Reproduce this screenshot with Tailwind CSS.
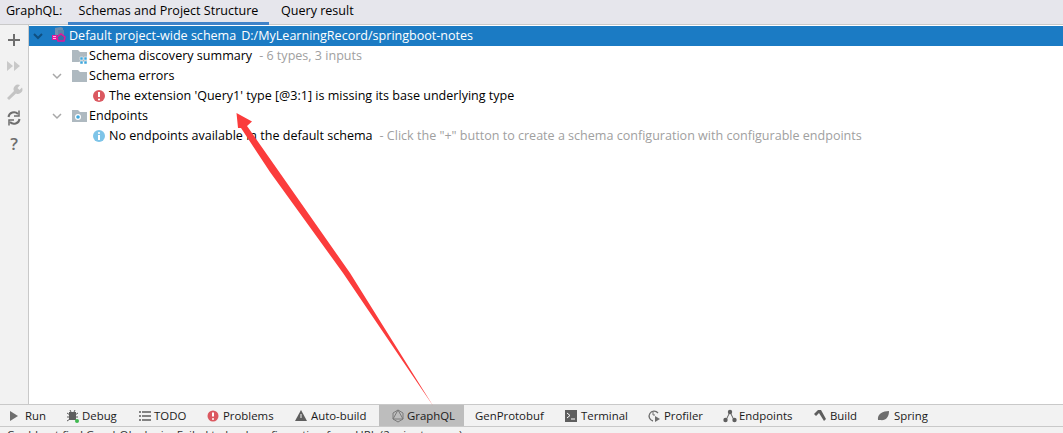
<!DOCTYPE html>
<html lang="en">
<head>
<meta charset="utf-8">
<title>GraphQL tool window</title>
<script src="https://cdn.jsdelivr.net/npm/@tailwindcss/browser@4"></script>
</head>
<body class="relative w-[1063px] h-[433px] overflow-hidden bg-white text-[12.55px] leading-5 text-black font-['Open_Sans','Noto_Sans',sans-serif]">

<!-- tabs -->
<header class="flex h-[25px] bg-[#e6e6ec] border-b border-[#c9c9c9]">
    <div class="w-[68px] pl-[6px] pt-[1px]">GraphQL:</div>
    <div class="w-[201px] text-center pt-[1px] border-b-[3px] border-[#4083c9] h-[25px]">Schemas and Project Structure</div>
    <div class="ml-[12px] pt-[1px]">Query result</div>
</header>

<div class="flex h-[379px]">
    <!-- left toolbar -->
    <aside class="w-[29px] shrink-0 bg-[#f2f2f2] border-r border-[#c9c9c9] flex flex-col items-center pt-[5px] gap-[6px]">
        <svg width="20" height="20" viewBox="0 0 20 20"><path d="M4 10h12M10 4v12" stroke="#6e6e6e" stroke-width="2"/></svg>
        <svg width="20" height="20" viewBox="0 0 20 20"><path d="M3 5l6 5-6 5zM10 5l6 5-6 5z" fill="#c9c9c9"/></svg>
        <svg width="20" height="20" viewBox="0 0 20 20"><path d="M3 16l7-7a4.500 4.500 0 0 1 6-6l-2.500 3 2 2L18 5.500a4.500 4.500 0 0 1-6 6L5 18z" fill="#c4c4c4"/></svg>
        <svg width="20" height="20" viewBox="0 0 20 20" fill="none" stroke="#6e6e6e" stroke-width="2"><path d="M4.500 9a5.500 5.500 0 0 1 9.500-3M15.500 11a5.500 5.500 0 0 1-9.500 3"/><path d="M15 2.500V8h-5M5 17.500V12h5" stroke-width="1.500"/></svg>
        <div class="h-5 leading-5 text-[17px] font-semibold text-[#6e6e6e]">?</div>
    </aside>

    <!-- tree -->
    <main class="flex-1 pt-[1px]">
        <div class="flex items-center h-5 pb-[1px] bg-[#1b7bc4] text-white">
            <svg class="ml-[3px] mr-[6px]" width="12" height="12" viewBox="0 0 12 12" fill="none"><path d="M2 4l4 4 4-4" stroke="#0f4f80" stroke-width="2"/></svg>
            <svg class="mr-[1px]" width="18" height="18" viewBox="0 0 18 18"><path d="M5 1l6-1 2 1v7H5z" fill="#6d8fb0"/><path d="M8 3h6v7H8z" fill="#5c83a8"/><path d="M2 8h5v5H2z" fill="#e5139b"/><path d="M7 10l4-3 4 3-1 4H8z" fill="#3a6fa5" stroke="#e5139b" stroke-width="1.500"/><path d="M3 9.500h3M3 11.500h3" stroke="#fff" stroke-width=".7"/></svg>
            <span>Default project-wide schema</span>
            <span class="ml-[5px]">D:/MyLearningRecord/springboot-notes</span>
        </div>
        <div class="flex items-center h-5 pb-[1px] pl-[43px]">
            <svg class="mr-[1px]" width="16" height="16" viewBox="0 0 16 16"><path d="M0 2h6l2 2h7v10H0z" fill="#aeb9c0"/><path d="M8 9h3v3H8zM12 9h3v3h-3zM8 13h3v3H8zM12 13h3v3h-3z" fill="#3fa7dc" stroke="#fff" stroke-width=".5"/></svg>
            <span>Schema discovery summary</span>
            <span class="ml-[7px] text-[#a0a0a0]">- 6 types, 3 inputs</span>
        </div>
        <div class="flex items-center h-5 pb-[1px] pl-[22px]">
            <svg class="mr-[9px]" width="12" height="12" viewBox="0 0 12 12" fill="none"><path d="M2 4l4 4 4-4" stroke="#a8a8a8" stroke-width="1.500"/></svg>
            <svg class="mr-[1px]" width="16" height="16" viewBox="0 0 16 16"><path d="M0 2h6l2 2h7v10H0z" fill="#aeb9c0"/></svg>
            <span>Schema errors</span>
        </div>
        <div class="flex items-center h-5 pb-[1px] pl-[63px]">
            <svg class="mr-[3px]" width="14" height="14" viewBox="0 0 14 14"><circle cx="7" cy="7" r="6" fill="#db5860"/><path d="M7 3v5" stroke="#fff" stroke-width="2"/><circle cx="7" cy="10.500" r="1.100" fill="#fff"/></svg>
            <span>The extension 'Query1' type [@3:1] is missing its base underlying type</span>
        </div>
        <div class="flex items-center h-5 pb-[1px] pl-[22px]">
            <svg class="mr-[9px]" width="12" height="12" viewBox="0 0 12 12" fill="none"><path d="M2 4l4 4 4-4" stroke="#a8a8a8" stroke-width="1.500"/></svg>
            <svg class="mr-[1px]" width="16" height="16" viewBox="0 0 16 16"><path d="M0 2h6l2 2h7v10H0z" fill="#aeb9c0"/><circle cx="6" cy="9" r="3" fill="#fff"/><circle cx="6" cy="9" r="1.800" fill="#3fa7dc"/></svg>
            <span>Endpoints</span>
        </div>
        <div class="flex items-center h-5 pb-[1px] pl-[63px]">
            <svg class="mr-[3px]" width="14" height="14" viewBox="0 0 14 14"><circle cx="7" cy="7" r="6" fill="#7dc4e8"/><circle cx="7" cy="4" r="1.100" fill="#fff"/><path d="M7 6v5" stroke="#fff" stroke-width="2"/></svg>
            <span>No endpoints available in the default schema</span>
            <span class="ml-[7px] text-[#a0a0a0]">- Click the "+" button to create a schema configuration with configurable endpoints</span>
        </div>
    </main>
</div>

<!-- bottom tool strip -->
<footer class="flex h-[23px] bg-[#f2f2f2] border-t border-b border-[#c9c9c9] text-[#1a1a1a] text-[11.4px]">
    <div class="flex items-center w-[54px] pl-[9px]">
        <svg class="mr-[6px]" width="10" height="12" viewBox="0 0 10 12"><path d="M1 1l8 5-8 5z" fill="#6e6e6e"/></svg>Run
    </div>
    <div class="flex items-center w-[73px] pl-[12px]">
        <svg class="mr-[2px]" width="14" height="14" viewBox="0 0 14 14"><path d="M3 3h7v8H3z" fill="#5e5e5e"/><path d="M1 4l3 2M1 8h3M1 12l3-2M12 4l-3 2M12 8H9M5 3l-1-2M8 3l1-2" stroke="#5e5e5e"/><circle cx="11" cy="12" r="2" fill="#3fb950"/></svg>Debug
    </div>
    <div class="flex items-center w-[68px] pl-[12px]">
        <svg class="mr-[3px]" width="12" height="10" viewBox="0 0 12 10"><path d="M0 1h2M3 1h9M0 5h2M3 5h9M0 9h2M3 9h9" stroke="#5e5e5e" stroke-width="1.500"/></svg>TODO
    </div>
    <div class="flex items-center w-[88px] pl-[12px]">
        <svg class="mr-[4px]" width="12" height="12" viewBox="0 0 12 12"><circle cx="6" cy="6" r="5.500" fill="#db5860"/><path d="M6 2.500v4" stroke="#fff" stroke-width="2"/><circle cx="6" cy="9" r="1" fill="#fff"/></svg>Problems
    </div>
    <div class="flex items-center w-[96px] pl-[12px]">
        <svg class="mr-[4px]" width="12" height="12" viewBox="0 0 12 12"><path d="M6 0l6 11H0z" fill="#5e5e5e"/><path d="M6 4v4" stroke="#f2f2f2"/></svg>Auto-build
    </div>
    <div class="flex items-center w-[85px] pl-[12px] bg-[#bdbdbd]">
        <svg class="mr-[2px]" width="14" height="14" viewBox="0 0 14 14" fill="none" stroke="#7a7a7a"><path d="M7 1l5 9H2z"/><path d="M7 1l5 3v6l-5 3-5-3V4z"/></svg>GraphQL
    </div>
    <div class="flex items-center w-[89px] pl-[11px]">GenProtobuf</div>
    <div class="flex items-center w-[82px] pl-[12px]">
        <svg class="mr-[4px]" width="12" height="12" viewBox="0 0 12 12"><path d="M0 0h12v12H0z" fill="#5e5e5e"/><path d="M2 3l3 2.500L2 8M6 9h4" stroke="#fff" fill="none"/></svg>Terminal
    </div>
    <div class="flex items-center w-[76px] pl-[12px]">
        <svg class="mr-[3px]" width="14" height="14" viewBox="0 0 14 14" fill="none"><path d="M11 4a5 5 0 1 0-5 8" stroke="#6e6e6e" stroke-width="1.300"/><path d="M6 3v3h2" stroke="#6e6e6e"/><path d="M8 7l5 3-5 3z" fill="#6e6e6e"/></svg>Profiler
    </div>
    <div class="flex items-center w-[90px] pl-[12px]">
        <svg class="mr-[2px]" width="14" height="14" viewBox="0 0 14 14"><circle cx="7" cy="3" r="2.200" fill="#5e5e5e"/><circle cx="2.500" cy="11" r="2.200" fill="#5e5e5e"/><circle cx="11.500" cy="11" r="2.200" fill="#5e5e5e"/><path d="M7 3l-4 8M7 3l4 8" stroke="#5e5e5e"/></svg>Endpoints
    </div>
    <div class="flex items-center w-[64px] pl-[12px]">
        <svg class="mr-[3px]" width="14" height="14" viewBox="0 0 14 14"><path d="M1 5l4-4h3l5 9-2 2-5-8-3 3z" fill="#5e5e5e"/></svg>Build
    </div>
    <div class="flex items-center pl-[12px]">
        <svg class="mr-[4px]" width="13" height="12" viewBox="0 0 13 12"><path d="M1 10C0 4 6 1 12 1c0 6-3 10-9 9z" fill="#6e6e6e"/></svg>Spring
    </div>
</footer>

<!-- status line, cut off by the window edge -->
<div class="h-[6px] bg-[#f2f2f2] overflow-hidden pl-[7px] text-[#333] text-[11.5px] leading-[16px] whitespace-nowrap">Could not find GraphQL plugin: Failed to load configuration from URL (2 minutes ago)</div>

<!-- red annotation arrow over the screenshot -->
<svg class="absolute left-0 top-0 pointer-events-none" width="1063" height="433" viewBox="0 0 1063 433">
    <path d="M236.500 113L252 121.500 247 126 350 273 433.500 406.500 343 273 270 172 241 128 238 128z" fill="#fb3c3c"/>
</svg>

</body>
</html>
